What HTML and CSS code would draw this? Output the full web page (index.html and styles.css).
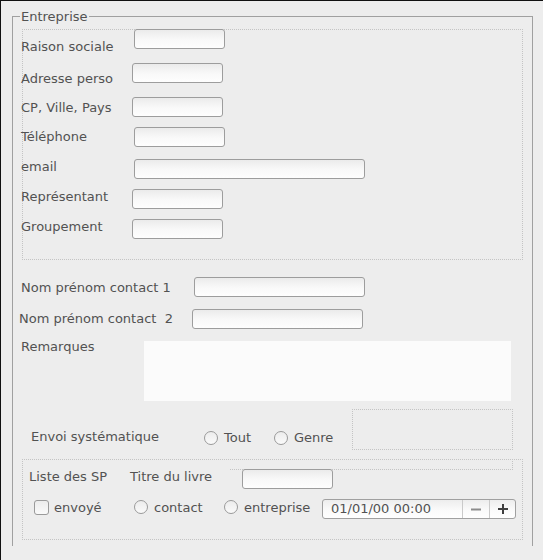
FILE: index.html
```html
<!DOCTYPE html>
<html lang="fr">
<head>
<meta charset="utf-8">
<title>Entreprise</title>
<link rel="stylesheet" href="styles.css">
</head>
<body>
<div class="window">
  <div class="group">
    <span class="group-title">Entreprise</span>

    <div class="dotbox company">
      <div class="fields">
        <div class="row"><span class="lbl">Raison sociale</span><span class="inp"></span></div>
        <div class="row"><span class="lbl">Adresse perso</span><span class="inp"></span></div>
        <div class="row"><span class="lbl">CP, Ville, Pays</span><span class="inp"></span></div>
        <div class="row"><span class="lbl">Téléphone</span><span class="inp"></span></div>
        <div class="row"><span class="lbl">email</span><span class="inp inp-email"></span></div>
        <div class="row"><span class="lbl">Représentant</span><span class="inp"></span></div>
        <div class="row"><span class="lbl">Groupement</span><span class="inp"></span></div>
      </div>
    </div>

    <div class="contact c1"><span class="lbl">Nom prénom contact 1</span><span class="inp inp-contact"></span></div>
    <div class="contact c2"><span class="lbl">Nom prénom contact&nbsp; 2</span><span class="inp inp-contact"></span></div>
    <div class="contact remarks"><span class="lbl">Remarques</span><div class="memo"></div></div>

    <div class="envoi">
      <span class="lbl">Envoi systématique</span>
      <label class="radio-item item-tout"><span class="radio"></span><span class="txt">Tout</span></label>
      <label class="radio-item"><span class="radio"></span><span class="txt">Genre</span></label>
      <div class="dotbox sidebox"></div>
    </div>

    <div class="dotbox sp-box">
      <div class="dotbox mini"></div>
      <div class="sp-row1">
        <span class="lbl lbl-sp">Liste des SP</span>
        <span class="lbl lbl-titre">Titre du livre</span>
        <span class="inp inp-titre"></span>
      </div>
      <div class="sp-row2">
        <label class="check-item"><span class="check"></span><span class="txt">envoyé</span></label>
        <label class="radio-item item-contact"><span class="radio"></span><span class="txt">contact</span></label>
        <label class="radio-item item-entreprise"><span class="radio"></span><span class="txt">entreprise</span></label>
        <div class="date">
          <span class="date-text">01/01/00 00:00</span>
          <span class="spin-btn spin-minus"><svg width="12" height="12" viewBox="0 0 12 12"><path d="M1 6.5H11" stroke="#8c8c8c" stroke-width="2"/></svg></span>
          <span class="spin-btn spin-plus"><svg width="12" height="12" viewBox="0 0 12 12"><path d="M1 6H11M6 1V11" stroke="#3e3e3e" stroke-width="2"/></svg></span>
        </div>
      </div>
    </div>
  </div>
</div>
</body>
</html>
```
FILE: styles.css
```css
* { box-sizing: border-box; }

html, body {
  margin: 0;
  padding: 0;
}

body {
  background: #ededed;
  font-family: "DejaVu Sans", sans-serif;
  font-size: 13px;
  line-height: 15px;
  color: #525252;
}

.window {
  width: 543px;
  height: 560px;
  border-left: 1px solid #111;
  border-top: 1px solid #111;
  background: #ededed;
  padding: 15px 0 0 11px;
}

.group {
  position: relative;
  width: 521px;
  height: 530px;
  border: 1px solid #a0a0a0;
  border-bottom: none;
}

.group-title {
  position: absolute;
  left: 7px;
  top: -8px;
  padding: 0 1px;
  background: #ededed;
  white-space: nowrap;
}

.dotbox {
  border: 1px dotted #c4c4c4;
}

.lbl {
  flex: none;
  white-space: nowrap;
}

.inp {
  flex: none;
  display: block;
  width: 91px;
  height: 20px;
  border: 1px solid #9d9d9d;
  border-radius: 3px;
  background: linear-gradient(#ebebeb, #f9f9f9 55%, #fefefe);
}

/* company block */
.company {
  margin: 12px 0 0 9px;
  width: 501px;
  height: 231px;
}

.fields {
  display: grid;
  grid-template-rows: 34px 34px 30px 32px 30px 30px 20px;
  margin-top: -1px;
}

.row {
  display: flex;
  align-items: flex-start;
}

.company .lbl {
  width: 111px;
  margin-left: -2px;
}

.row:nth-child(1) .lbl { margin-top: 10px; }
.row:nth-child(2) .lbl { margin-top: 8px; }
.row:nth-child(3) .lbl { margin-top: 3px; }
.row:nth-child(4) .lbl { margin-top: 2px; }

.row:nth-child(1) .inp,
.row:nth-child(4) .inp,
.row:nth-child(5) .inp { margin-left: 2px; }

.inp-email { width: 231px; }

/* contacts */
.contact {
  display: flex;
  align-items: flex-start;
  margin-left: 8px;
}

.c1 { margin-top: 17px; }
.c1 .lbl { width: 173px; margin-top: 3px; }

.c2 { margin-top: 12px; margin-left: 6px; }
.c2 .lbl { width: 173px; margin-top: 2px; }

.inp-contact { width: 171px; }

.remarks { margin-top: 12px; }
.remarks .lbl { width: 123px; margin-top: -2px; }

.memo {
  flex: none;
  width: 367px;
  height: 60px;
  background: #fbfbfb;
}

/* envoi */
.envoi {
  display: flex;
  align-items: flex-start;
  margin: 8px 0 0 18px;
  width: 482px;
  height: 41px;
}

.envoi .lbl {
  width: 173px;
  margin-top: 20px;
}

.envoi .radio-item { margin-top: 21px; }
.item-tout { width: 70px; }

.radio-item,
.check-item {
  display: flex;
  align-items: flex-start;
  flex: none;
}

.radio {
  display: block;
  width: 14px;
  height: 14px;
  margin-top: 1px;
  border: 1px solid #9a9a9a;
  border-radius: 50%;
  background: linear-gradient(#ececec, #fafafa);
}

.check {
  display: block;
  width: 15px;
  height: 15px;
  margin-top: 1px;
  border: 1px solid #9a9a9a;
  border-radius: 3px;
  background: linear-gradient(#ececec, #fafafa);
}

.radio-item .txt { margin-left: 6px; }
.check-item .txt { margin-left: 5px; margin-top: 1px; }
.sp-row2 .radio-item .txt { margin-top: 1px; }

.sidebox {
  margin-left: auto;
  width: 161px;
  height: 41px;
}

/* SP block */
.sp-box {
  position: relative;
  margin: 9px 0 0 9px;
  width: 501px;
  height: 81px;
}

.mini {
  position: absolute;
  left: 207px;
  top: -1px;
  width: 283px;
  height: 11px;
  border-left: none;
}

.sp-row1 {
  display: flex;
  align-items: flex-start;
  margin: 9px 0 0 6px;
}

.lbl-sp { width: 101px; }
.lbl-titre { width: 112px; }

.inp-titre { position: relative; }

.sp-row2 {
  display: flex;
  align-items: flex-start;
  margin: 10px 0 0 11px;
}

.check-item { width: 100px; }
.item-contact { width: 90px; }
.item-entreprise { width: 98px; }

.date {
  flex: none;
  display: flex;
  width: 194px;
  height: 20px;
  border: 1px solid #a0a0a0;
  border-radius: 3px;
  background: linear-gradient(#ededed, #fafafa 55%, #fefefe);
  overflow: hidden;
}

.date-text {
  flex: 1;
  padding-left: 8px;
  line-height: 18px;
  white-space: nowrap;
}

.spin-btn {
  flex: none;
  display: flex;
  align-items: center;
  justify-content: center;
  border-left: 1px solid #cacaca;
}

.spin-minus { width: 27px; }
.spin-plus { width: 26px; }
```
